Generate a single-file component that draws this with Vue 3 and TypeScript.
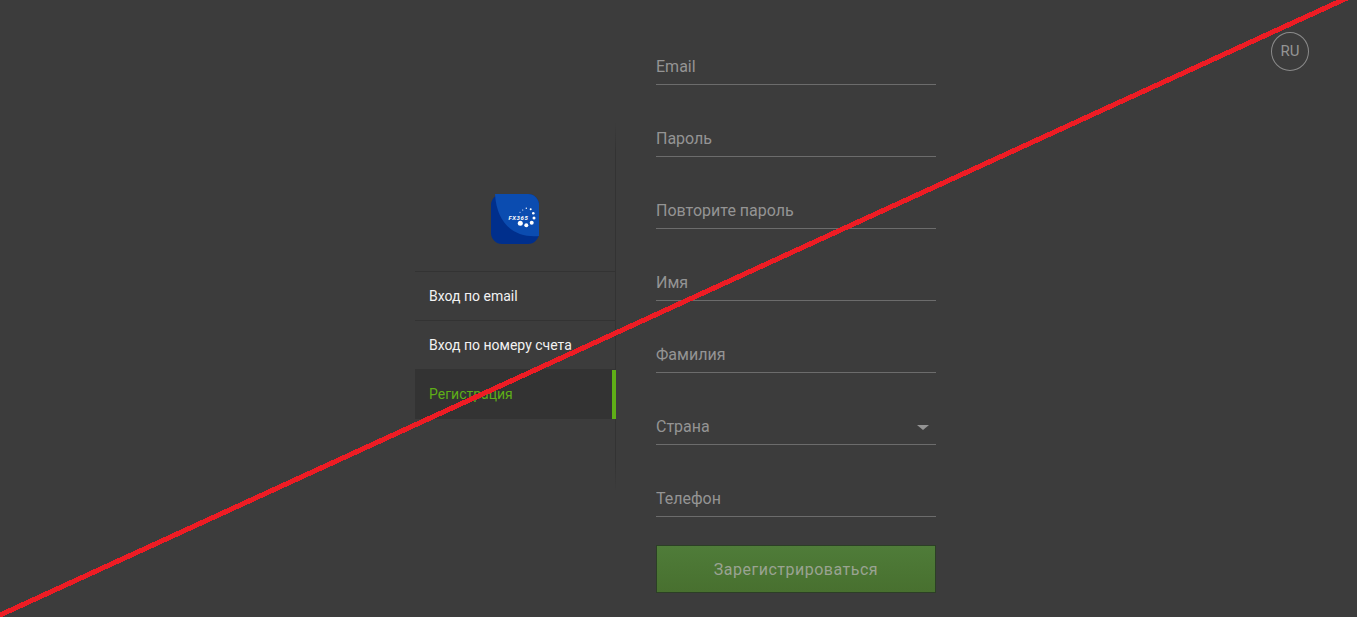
<script setup lang="ts">
import { ref } from 'vue'

type Pole = {
  id: string
  metka: string
  tip: string
}

const menu = ['Вход по email', 'Вход по номеру счета', 'Регистрация']
const aktivnyi = ref(2)

const polya: Pole[] = [
  { id: 'email', metka: 'Email', tip: 'email' },
  { id: 'password', metka: 'Пароль', tip: 'password' },
  { id: 'password2', metka: 'Повторите пароль', tip: 'password' },
  { id: 'name', metka: 'Имя', tip: 'text' },
  { id: 'surname', metka: 'Фамилия', tip: 'text' }
]

const tochki = [
  [29.3, 29.3, 2.5],
  [35.3, 31.3, 2],
  [40.7, 28.7, 2],
  [43, 24, 1.5],
  [42.3, 19.3, 1.3],
  [39.7, 15.3, 1],
  [35.3, 14.3, 0.7],
  [31.7, 16, 0.6],
  [29, 18.3, 0.5]
]
</script>

<template>
  <div class="stranica">
    <main class="blok">
      <aside class="bok">
        <div class="logo">
          <svg width="48" height="50" viewBox="0 0 48 50">
            <rect width="48" height="50" rx="11" fill="#002f8c" />
            <path d="M4 0H37A11 11 0 0 1 48 11V42C25 44 6 32 4 0z" fill="#0b4cb0" />
            <text x="17.5" y="26" class="logo-tekst">FX365</text>
            <circle v-for="(t, i) in tochki" :key="i" :cx="t[0]" :cy="t[1]" :r="t[2]" fill="#fff" />
          </svg>
        </div>
        <nav class="menu">
          <a
            v-for="(punkt, i) in menu"
            :key="punkt"
            class="punkt"
            :class="{ aktivnyi: i === aktivnyi }"
            @click="aktivnyi = i"
          >{{ punkt }}</a>
        </nav>
      </aside>

      <form class="forma" @submit.prevent>
        <label v-for="pole in polya" :key="pole.id" class="pole">
          <input :type="pole.tip" :placeholder="pole.metka" />
        </label>
        <div class="pole vybor">
          <span>Страна</span>
          <i class="strelka"></i>
        </div>
        <label class="pole">
          <input type="tel" placeholder="Телефон" />
        </label>
        <button type="submit" class="knopka">Зарегистрироваться</button>
      </form>
    </main>

    <button class="yazyk">RU</button>

    <svg class="liniya" width="1357" height="617" viewBox="0 0 1357 617">
      <line x1="-2" y1="616" x2="1347" y2="-2" stroke="#ed1c24" stroke-width="5" shape-rendering="crispEdges" />
    </svg>
  </div>
</template>

<style>
html,
body {
  margin: 0;
  background: #3c3c3c;
}
</style>

<style scoped>
.stranica {
  position: relative;
  height: 617px;
  overflow: hidden;
  background: #3c3c3c;
  font-family: Roboto, "Liberation Sans", sans-serif;
}

.blok {
  display: flex;
  justify-content: center;
  padding: 48px 6px 0 0;
}

.bok {
  width: 201px;
  height: 370px;
  margin-top: 74px;
  box-sizing: border-box;
  border-right: 1px solid #333;
  border-image: linear-gradient(transparent, #333 8%, #333 92%, transparent) 1;
  display: flex;
  flex-direction: column;
}

.logo {
  height: 150px;
  padding: 72px 0 0 76px;
  box-sizing: border-box;
  border-bottom: 1px solid #333;
}

.logo svg {
  display: block;
}

.logo-tekst {
  font-size: 6px;
  font-weight: 700;
  font-style: italic;
  letter-spacing: 0.6px;
  fill: #fff;
}

.menu {
  display: flex;
  flex-direction: column;
}

.punkt {
  height: 49px;
  line-height: 48px;
  padding-left: 14px;
  font-size: 14px;
  color: #f2f2f2;
  border-bottom: 1px solid #333;
  box-sizing: border-box;
  cursor: pointer;
}

.punkt.aktivnyi {
  margin-right: -1px;
  line-height: 49px;
  color: #5fae17;
  background: #333;
  border-bottom: 0;
  border-right: 4px solid #5fae17;
}

.forma {
  width: 280px;
  margin-left: 40px;
  display: flex;
  flex-direction: column;
}

.pole {
  display: flex;
  align-items: center;
  justify-content: space-between;
  height: 37px;
  margin-bottom: 35px;
  box-sizing: border-box;
  border-bottom: 1px solid #6c6c6c;
  color: #949494;
  font-size: 16px;
}

.pole input {
  width: 100%;
  padding: 0;
  border: 0;
  outline: 0;
  background: transparent;
  font: inherit;
  color: #ccc;
}

.pole input::placeholder {
  color: #949494;
  opacity: 1;
}

.strelka {
  width: 0;
  height: 0;
  margin-right: 7px;
  margin-top: 3px;
  border-left: 6px solid transparent;
  border-right: 6px solid transparent;
  border-top: 5px solid #949494;
}

.knopka {
  height: 48px;
  margin-top: -7px;
  background: linear-gradient(#4f7c39, #48702f);
  border: 1px solid #2c3f26;
  color: #9aa392;
  font-family: inherit;
  font-size: 16px;
  letter-spacing: 0.5px;
  cursor: pointer;
}

.yazyk {
  position: absolute;
  top: 32px;
  right: 48px;
  width: 38px;
  height: 39px;
  padding: 0 0 2px;
  border: 1px solid #8a8a8a;
  border-radius: 50%;
  background: transparent;
  color: #949494;
  font-family: inherit;
  font-size: 15px;
  cursor: pointer;
}

.liniya {
  position: absolute;
  top: 0;
  left: 0;
  pointer-events: none;
}
</style>
